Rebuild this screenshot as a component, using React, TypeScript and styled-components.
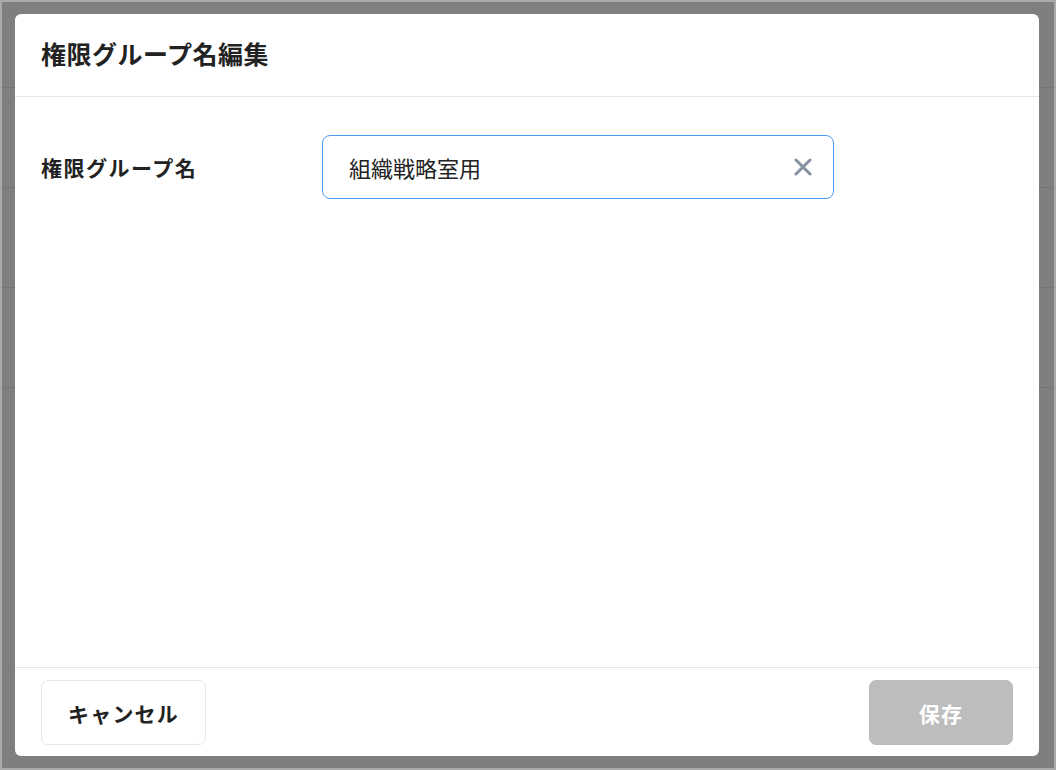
import React from "react";
import styled, { createGlobalStyle } from "styled-components";

const Global = createGlobalStyle`
  html, body { margin: 0; padding: 0; }
  body {
    font-family: "Noto Sans CJK JP", "Noto Sans", sans-serif;
    color: #222;
  }
  * { box-sizing: border-box; }
`;

const Backdrop = styled.div`
  width: 1056px;
  height: 770px;
  background: #7f7f7f;
  border: 2px solid #a9a9a9;
  position: relative;
  overflow: hidden;
  padding: 12px 15px 12px 13px;
  display: flex;
`;

const PageLines = styled.div`
  position: absolute;
  inset: 0;
  display: flex;
  flex-direction: column;
  padding-top: 85px;
  gap: 99px;
`;

const PageLine = styled.div`
  height: 1px;
  background: #747474;
`;

const Modal = styled.div`
  position: relative;
  flex: 1;
  background: #fff;
  border-radius: 6px;
  display: flex;
  flex-direction: column;
`;

const Header = styled.div`
  height: 83px;
  padding: 0 26px;
  display: flex;
  align-items: center;
  border-bottom: 1px solid #e1e6eb;
`;

const Title = styled.h1`
  margin: 0;
  font-size: 25px;
  font-weight: 700;
  color: #222;
  letter-spacing: 0.5px;
  padding-bottom: 4px;
`;

const Body = styled.div`
  flex: 1;
  padding: 38px 26px;
`;

const FieldRow = styled.div`
  display: grid;
  grid-template-columns: 281px 512px;
  align-items: center;
`;

const Label = styled.label`
  font-size: 21px;
  font-weight: 700;
  color: #222;
  letter-spacing: 1.5px;
`;

const InputBox = styled.div`
  height: 64px;
  border: 1px solid #4d9bf0;
  border-radius: 8px;
  display: flex;
  align-items: center;
  padding: 0 18px 0 26px;
`;

const Input = styled.input`
  flex: 1;
  border: none;
  outline: none;
  background: transparent;
  font-family: "Noto Sans CJK JP", "Noto Sans", sans-serif;
  font-size: 22px;
  color: #222;
  padding: 0;
`;

const ClearButton = styled.button`
  border: none;
  background: transparent;
  padding: 0;
  width: 24px;
  height: 24px;
  display: flex;
  align-items: center;
  justify-content: center;
  cursor: pointer;
`;

const Footer = styled.div`
  height: 89px;
  border-top: 1px solid #e1e6eb;
  padding: 12px 26px 11px;
  display: flex;
  justify-content: space-between;
  align-items: stretch;
`;

const Button = styled.button<{ $primary?: boolean; $w: number }>`
  width: ${(p) => p.$w}px;
  border-radius: 7px;
  font-family: "Noto Sans CJK JP", "Noto Sans", sans-serif;
  font-size: 21px;
  font-weight: 700;
  letter-spacing: 1.2px;
  border: 1px solid ${(p) => (p.$primary ? "#bdbdbd" : "#e3e7ec")};
  background: ${(p) => (p.$primary ? "#bdbdbd" : "#fff")};
  color: ${(p) => (p.$primary ? "#fff" : "#222")};
  cursor: pointer;
`;

export default function App() {
  return (
    <>
      <Global />
      <Backdrop>
        <PageLines>
          <PageLine />
          <PageLine />
          <PageLine />
          <PageLine />
        </PageLines>
        <Modal>
          <Header>
            <Title>権限グループ名編集</Title>
          </Header>
          <Body>
            <FieldRow>
              <Label>権限グループ名</Label>
              <InputBox>
                <Input defaultValue="組織戦略室用" />
                <ClearButton aria-label="clear">
                  <svg width="18" height="18" viewBox="0 0 18 18">
                    <path
                      d="M2 2 L16 16 M16 2 L2 16"
                      stroke="#8591a0"
                      strokeWidth="3"
                      strokeLinecap="round"
                    />
                  </svg>
                </ClearButton>
              </InputBox>
            </FieldRow>
          </Body>
          <Footer>
            <Button $w={165}>キャンセル</Button>
            <Button $primary $w={144}>保存</Button>
          </Footer>
        </Modal>
      </Backdrop>
    </>
  );
}
